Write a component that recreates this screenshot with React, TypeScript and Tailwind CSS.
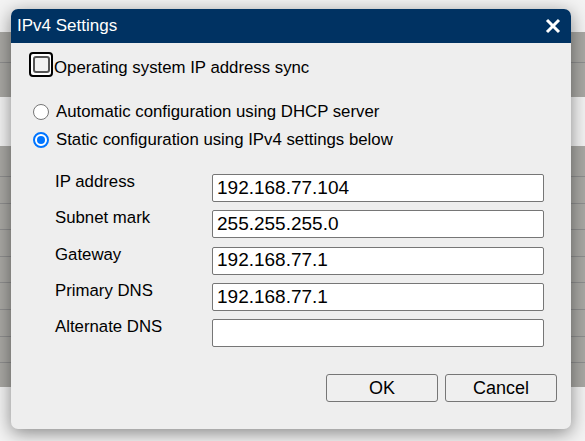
import React from "react";

const font = { fontFamily: '"Liberation Sans", Arial, sans-serif' };

function Radio({ checked }: { checked?: boolean }) {
  return checked ? (
    <span className="flex h-[16px] w-[16px] items-center justify-center rounded-full border-2 border-[#0075ff] bg-white">
      <span className="h-[8px] w-[8px] rounded-full bg-[#0075ff]" />
    </span>
  ) : (
    <span className="h-[16px] w-[16px] rounded-full border border-[#767676] bg-white" />
  );
}

const fields = [
  ["IP address", "192.168.77.104"],
  ["Subnet mark", "255.255.255.0"],
  ["Gateway", "192.168.77.1"],
  ["Primary DNS", "192.168.77.1"],
  ["Alternate DNS", ""],
];

export default function App() {
  return (
    <div className="relative h-[441px] w-[585px] overflow-hidden bg-[#f3f3f3]" style={font}>
      {/* background page */}
      <div className="flex flex-col">
        <div className="h-[32px]" />
        <div className="flex h-[65px] flex-col bg-[#a9a8a4]">
          <div className="h-[31px] border-b border-[#8e8e8e]" />
        </div>
        <div className="h-[49px]" />
        <div className="flex flex-col bg-[#a9a8a4]">
          <div className="h-[31px] border-b border-[#8e8e8e]" />
          <div className="h-[27px] border-b border-[#8e8e8e]" />
          <div className="h-[26px] border-b border-[#8e8e8e]" />
          <div className="h-[27px] border-b border-[#8e8e8e]" />
          <div className="h-[26px] border-b border-[#8e8e8e]" />
          <div className="h-[27px] border-b border-[#8e8e8e]" />
          <div className="h-[27px] border-b border-[#8e8e8e]" />
          <div className="h-[26px] border-b border-[#8e8e8e]" />
          <div className="h-[24px]" />
        </div>
      </div>

      {/* dialog */}
      <div className="absolute left-[11px] top-[9px] flex h-[420px] w-[560px] flex-col overflow-hidden rounded-[7px] bg-[#eeeeee] shadow-[0_4px_18px_rgba(0,0,0,0.45)]">
        <div className="flex h-[34px] items-center justify-between bg-[#003262] pl-[6px] pr-[10px] text-white">
          <span className="text-[17px]">IPv4 Settings</span>
          <svg width="16" height="16" viewBox="0 0 16 16">
            <path d="M2 2 L14 14 M14 2 L2 14" stroke="white" strokeWidth="3" strokeLinecap="butt" />
          </svg>
        </div>

        <div className="flex flex-col pl-[18px] pt-[9px] text-[16.8px] text-black">
          <div className="flex h-[25px] items-end">
            <span className="flex h-[25px] w-[24px] items-center justify-center rounded-[4px] border-2 border-black bg-white">
              <span className="h-[17px] w-[17px] rounded-[3px] border-2 border-[#555] bg-[#f2f2f2]" />
            </span>
            <span className="ml-[1px] leading-[19px]">Operating system IP address sync</span>
          </div>

          <div className="mt-[21px] flex flex-col pl-[4px]">
            <div className="flex h-[28px] items-center gap-[7px]">
              <Radio />
              <span>Automatic configuration using DHCP server</span>
            </div>
            <div className="flex h-[28px] items-center gap-[7px]">
              <Radio checked />
              <span>Static configuration using IPv4 settings below</span>
            </div>
          </div>

          <div className="mt-[20px] grid grid-cols-[157px_332px] gap-y-[8.25px] pl-[26px]">
            {fields.map(([label, value]) => (
              <React.Fragment key={label}>
                <div className="-mt-[2px] leading-[20px]">{label}</div>
                <div className="flex h-[28px] items-center rounded-[2px] border border-[#767676] bg-white px-[4px] text-[19px]">
                  {value}
                </div>
              </React.Fragment>
            ))}
          </div>

          <div className="mt-[27px] flex justify-end gap-[7px] pr-[14px]">
            <button className="flex h-[28px] w-[112px] items-center justify-center rounded-[3px] border border-[#767676] bg-[#efefef] text-[18px]">
              OK
            </button>
            <button className="flex h-[28px] w-[112px] items-center justify-center rounded-[3px] border border-[#767676] bg-[#efefef] text-[18px]">
              Cancel
            </button>
          </div>
        </div>
      </div>
    </div>
  );
}
